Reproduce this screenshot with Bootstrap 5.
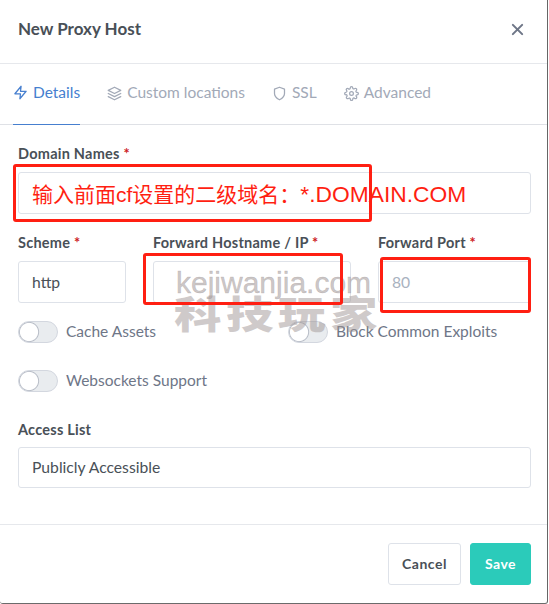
<!DOCTYPE html>
<html lang="zh">
<head>
<meta charset="utf-8">
<title>New Proxy Host</title>
<link href="https://cdn.jsdelivr.net/npm/bootstrap@5.3.0/dist/css/bootstrap.min.css" rel="stylesheet">
<style>
html,body{height:604px;overflow:hidden;background:#fff}
body{font-family:"Lato","Noto Sans",sans-serif;color:#495057;font-size:15px}
.sheet{position:relative;width:548px;height:604px;border-bottom:1px solid #6b6b6b;border-right:1px solid #666;border-bottom-right-radius:3px;border-bottom-left-radius:3px;box-sizing:border-box}
.sheet .modal-content{border:0;border-radius:0;height:603px;background:transparent}
.head-bar{height:64px;padding:0 23px 5px 18px;border-bottom:1px solid #e6e8ec}
.head-title{font-size:17px;font-weight:700;color:#495057;margin:0}
.close-x{width:13px;height:13px;color:#6e7687}
.tabs-bar{height:61px;border-bottom:1px solid #dfe1e6;padding-left:13px;gap:27px;flex-wrap:nowrap}
.tabs-bar .nav-link{padding:0 0 3px;border:0;margin:0;border-radius:0;height:61px;color:#a2a9b7;font-size:15.5px;display:flex;align-items:center;gap:5px;margin-bottom:-1px;background:none}
.tabs-bar .nav-link.active{color:#467fcf;border-bottom:1px solid #467fcf}
.tab-ic{width:15px;height:15px;flex:none}
.form-zone{padding:19px 16px 0 18px;flex:1 1 auto}
.fld-label{font-size:14.5px;letter-spacing:.24px;font-weight:700;color:#495057;margin:0 0 9px;line-height:19px;display:block;white-space:nowrap}
.req{color:#cd201f}
.fld-input{height:42px;border:1px solid #dee2e9;border-radius:3px;font-size:15.7px;color:#495057;padding:0 13px;font-family:inherit}
.fld-input::placeholder{color:#a9b2c0}
.gap-domain{margin-bottom:19px}
.cols-mid{display:flex;margin-bottom:17px}
.col-a{width:108px;margin-right:27px}
.col-b{width:198px;margin-right:27px}
.col-c{width:153px}
.toggle-row{display:flex;height:22px;margin-bottom:27px}
.toggle-row.last-row{margin-bottom:29px}
.toggle-cell{flex:0 0 270px;display:flex;align-items:center}
.toggle-cell .form-check-input{width:40px;height:22px;margin:0 8px 0 0;float:none;border:1px solid #d3d7df;background-color:#e9ecef;background-image:radial-gradient(circle at 10px 10px,#fff 0 8.6px,#b9bec8 9.6px,rgba(185,190,200,0) 10.6px);background-position:0 0;background-size:auto;background-repeat:no-repeat;flex:none;box-shadow:none}
.toggle-cell .form-check-label{font-size:15.5px;color:#6e7687}
.sel-text{line-height:40px}
.tail-label{margin-bottom:8px}
.tail-input{height:41px;line-height:38px}
.foot-bar{height:79px;border-top:1px solid #e6e8ec;padding:0 16px 1px 18px;gap:9px}
.btn-cancel,.btn-save{height:42px;font-size:14px;font-weight:700;letter-spacing:.5px;border-radius:3px;padding:0;margin:0}
.btn-cancel{width:73px;background:#fff;border:1px solid #dee2e9;color:#495057}
.btn-save{width:61px;background:#2bcbba;border:1px solid #2bcbba;color:#fff}
.mark-box{position:absolute;border:3px solid #ff1f12;border-radius:3px;pointer-events:none}
.mark-a{left:13px;top:164px;width:359px;height:58px}
.mark-b{left:143px;top:253px;width:200px;height:52px}
.mark-c{left:380px;top:257px;width:151px;height:56px}
.mark-text{position:absolute;left:32px;top:178px;font-family:"Liberation Sans","Noto Sans CJK SC",sans-serif;font-size:21px;line-height:32px;color:#ff1f12;white-space:nowrap}
.mark-latin{font-size:22.8px}
.wm-a{position:absolute;left:176px;top:263px;font-family:"Liberation Sans",sans-serif;font-size:30px;line-height:40px;color:rgba(160,150,150,.55);-webkit-text-stroke:.4px rgba(160,150,150,.55);white-space:nowrap}
.wm-b{position:absolute;left:174px;top:289px;font-family:"Noto Sans CJK SC",sans-serif;font-weight:900;font-size:38px;line-height:46px;letter-spacing:3.6px;color:rgba(160,150,150,.5);white-space:nowrap;transform:scaleX(1.25);transform-origin:left center}
</style>
</head>
<body>
<div class="sheet">
  <div class="modal-content d-flex flex-column">
    <div class="head-bar d-flex align-items-center justify-content-between">
      <h5 class="head-title">New Proxy Host</h5>
      <svg class="close-x" viewBox="0 0 14 14" fill="none" stroke="currentColor" stroke-width="2.2" stroke-linecap="round"><path d="M2 2l10 10M12 2L2 12"/></svg>
    </div>
    <ul class="nav nav-tabs tabs-bar">
      <li class="nav-item"><a class="nav-link active" href="#"><svg class="tab-ic" viewBox="0 0 24 24" fill="none" stroke="currentColor" stroke-width="2" stroke-linejoin="round" stroke-linecap="round"><path d="M13 2L3 14h9l-1 8 10-12h-9l1-8z"/></svg>Details</a></li>
      <li class="nav-item"><a class="nav-link" href="#"><svg class="tab-ic" viewBox="0 0 24 24" fill="none" stroke="currentColor" stroke-width="2" stroke-linejoin="round" stroke-linecap="round"><path d="M12 2L2 7l10 5 10-5-10-5z"/><path d="M2 17l10 5 10-5"/><path d="M2 12l10 5 10-5"/></svg>Custom locations</a></li>
      <li class="nav-item"><a class="nav-link" href="#"><svg class="tab-ic" viewBox="0 0 24 24" fill="none" stroke="currentColor" stroke-width="2" stroke-linejoin="round" stroke-linecap="round"><path d="M12 22s8-4 8-10V5l-8-3-8 3v7c0 6 8 10 8 10z"/></svg>SSL</a></li>
      <li class="nav-item"><a class="nav-link" href="#"><svg class="tab-ic" viewBox="0 0 24 24" fill="none" stroke="currentColor" stroke-width="2" stroke-linejoin="round" stroke-linecap="round"><circle cx="12" cy="12" r="3"/><path d="M19.4 15a1.65 1.65 0 0 0 .33 1.82l.06.06a2 2 0 1 1-2.83 2.83l-.06-.06a1.65 1.65 0 0 0-2.82 1.17V21a2 2 0 1 1-4 0v-.09A1.65 1.65 0 0 0 7.27 19.74l-.06.06a2 2 0 1 1-2.83-2.83l.06-.06A1.65 1.65 0 0 0 3.27 14H3a2 2 0 1 1 0-4h.09A1.65 1.65 0 0 0 4.26 7.27l-.06-.06a2 2 0 1 1 2.83-2.83l.06.06A1.65 1.65 0 0 0 10 3.27V3a2 2 0 1 1 4 0v.09a1.65 1.65 0 0 0 2.82 1.17l.06-.06a2 2 0 1 1 2.83 2.83l-.06.06A1.65 1.65 0 0 0 20.91 10H21a2 2 0 1 1 0 4h-.09a1.65 1.65 0 0 0-1.51 1z"/></svg>Advanced</a></li>
    </ul>
    <form class="form-zone">
      <div class="gap-domain">
        <label class="fld-label">Domain Names <span class="req">*</span></label>
        <div class="form-control fld-input"></div>
      </div>
      <div class="cols-mid">
        <div class="col-a">
          <label class="fld-label">Scheme <span class="req">*</span></label>
          <div class="form-control fld-input sel-text">http</div>
        </div>
        <div class="col-b">
          <label class="fld-label">Forward Hostname / IP <span class="req">*</span></label>
          <input class="form-control fld-input" type="text">
        </div>
        <div class="col-c">
          <label class="fld-label">Forward Port <span class="req">*</span></label>
          <input class="form-control fld-input" type="text" placeholder="80">
        </div>
      </div>
      <div class="toggle-row">
        <div class="toggle-cell form-check form-switch p-0"><input class="form-check-input" type="checkbox"><label class="form-check-label">Cache Assets</label></div>
        <div class="toggle-cell form-check form-switch p-0"><input class="form-check-input" type="checkbox"><label class="form-check-label">Block Common Exploits</label></div>
      </div>
      <div class="toggle-row last-row">
        <div class="toggle-cell form-check form-switch p-0"><input class="form-check-input" type="checkbox"><label class="form-check-label">Websockets Support</label></div>
      </div>
      <div>
        <label class="fld-label tail-label">Access List</label>
        <div class="form-control fld-input sel-text tail-input">Publicly Accessible</div>
      </div>
    </form>
    <div class="foot-bar d-flex align-items-center justify-content-end">
      <button type="button" class="btn btn-cancel">Cancel</button>
      <button type="button" class="btn btn-save">Save</button>
    </div>
  </div>
  <div class="wm-a">kejiwanjia.com</div>
  <div class="wm-b">科技玩家</div>
  <div class="mark-box mark-a"></div>
  <div class="mark-box mark-b"></div>
  <div class="mark-box mark-c"></div>
  <div class="mark-text">输入前面cf设置的二级域名：<span class="mark-latin">*.DOMAIN.COM</span></div>
</div>
<script src="https://cdn.jsdelivr.net/npm/bootstrap@5.3.0/dist/js/bootstrap.bundle.min.js"></script>
</body>
</html>
